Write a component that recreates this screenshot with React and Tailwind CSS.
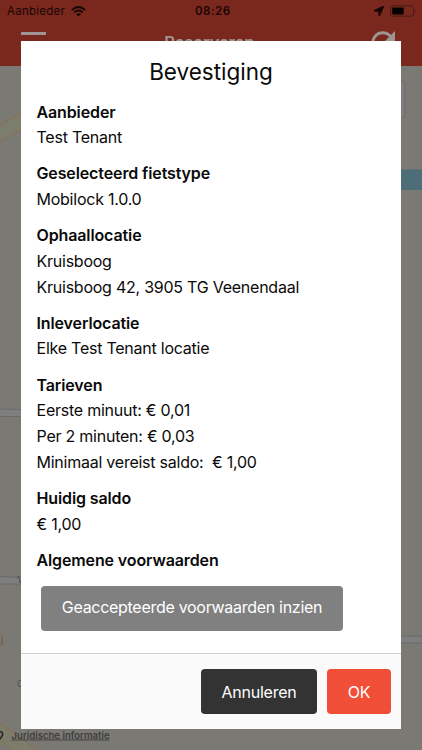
import { FaLocationArrow } from 'react-icons/fa'

const sections = [
  { title: 'Aanbieder', lines: ['Test Tenant'] },
  { title: 'Geselecteerd fietstype', lines: ['Mobilock 1.0.0'] },
  { title: 'Ophaallocatie', lines: ['Kruisboog', 'Kruisboog 42, 3905 TG Veenendaal'] },
  { title: 'Inleverlocatie', lines: ['Elke Test Tenant locatie'] },
  { title: 'Tarieven', lines: ['Eerste minuut: € 0,01', 'Per 2 minuten: € 0,03', 'Minimaal vereist saldo:  € 1,00'] },
  { title: 'Huidig saldo', lines: ['€ 1,00'] },
  { title: 'Algemene voorwaarden', lines: [] }
]

function StatusBar() {
  return (
    <div className="relative flex h-[22px] items-center justify-between pl-[7px] pr-[5px] text-[11.5px] text-[#180604]">
      <div className="flex items-center gap-[6px]">
        <span className="pt-px tracking-[0.25px]">Aanbieder</span>
        <svg className="h-[11px] w-[15px]" viewBox="0 0 15 11" fill="none" stroke="currentColor" strokeWidth="1.9">
          <path d="M0.9 4 Q7.5 -1.8 14.1 4" />
          <path d="M3.2 6.4 Q7.5 2.6 11.8 6.4" />
          <path d="M7.5 10.6 L5.1 8.2 Q7.5 6.3 9.9 8.2 Z" fill="currentColor" stroke="none" />
        </svg>
      </div>
      <span className="absolute left-[195px] pt-px font-semibold tracking-[0.5px]">08:26</span>
      <div className="flex items-center gap-[6px]">
        <FaLocationArrow className="h-[10px] w-[10px]" />
        <svg className="h-[12px] w-[27px]" viewBox="0 0 27 12">
          <rect x="0.6" y="0.9" width="23" height="10.2" rx="2.2" fill="none" stroke="#4a1a13" strokeWidth="1" />
          <rect x="2.2" y="2.5" width="11.5" height="7" rx="0.8" fill="#080101" />
          <path d="M25 4.2 Q26.6 6 25 7.8 Z" fill="#4a1a13" />
        </svg>
      </div>
    </div>
  )
}

function Header() {
  return (
    <header className="h-[66px] shrink-0 bg-[#7a281d]">
      <StatusBar />
      <div className="flex h-[44px] items-start justify-between pl-[21px] pr-[26.5px] pt-[10px] text-[#9e9492]">
        <svg className="h-[22px] w-[25px]" viewBox="0 0 25 22" fill="currentColor">
          <path d="M0 0h25v3H0zM0 9h25v3H0zM0 18h25v3H0z" />
        </svg>
        <span className="ml-[3px] text-[16.5px] font-semibold leading-[20px] tracking-[-0.1px]">Reserveren</span>
        <svg className="-mt-[2px] h-[25px] w-[26px]" viewBox="0 0 26 25">
          <path d="M20.500 6.500 A10 10 0 1 0 22.500 15" fill="none" stroke="currentColor" strokeWidth="3" />
          <path d="M25 1 V11.500 H14.500 Z" fill="currentColor" />
        </svg>
      </div>
    </header>
  )
}

function Map() {
  return (
    <svg className="w-full flex-1 bg-[#7b7974]" viewBox="0 66 422 684">
      {/* Roads */}
      <path d="M-2 127 L24 111.500 V128 L-2 143 Z" fill="#7c7d6c" />
      <path d="M-2 126.500 L24 111.500" stroke="#8c6c4b" />
      <path d="M-2 142.500 L24 128" stroke="#8c6c4b" />
      <path d="M-2 409 L22 409.500 V416.500 H-2 Z" fill="#7e7e7e" stroke="#6a6a6b" />
      <path d="M-2 576.500 L22 577.500 V584 H-2 Z" fill="#7e7e7e" stroke="#6a6a6b" />
      <path d="M400 636 H424 V643 H400 Z" fill="#7e7e7e" stroke="#696867" />
      <path d="M-2 722 L39 752 H14 L-2 742 Z" fill="#7c7d6c" />
      <path d="M-2 722 L40 752 M-2 738 L16 752" stroke="#8c6c4b" />
      {/* Water */}
      <path d="M400 169.500 H424 V190 H400 Z" fill="#4d6d79" />
      {/* Map controls */}
      <rect x="360" y="81" width="45" height="37" rx="4" fill="#7e7d7b" stroke="#6a6a6b" />
      <g fontFamily="Inter, sans-serif">
        <text x="1" y="643" fontSize="9.500" fill="#834528">j</text>
        <text x="17.500" y="583" fontSize="9" fill="#3d3d40">V</text>
        <text x="17" y="687" fontSize="9" fill="#4d4d50">C</text>
        <text x="11.500" y="738.500" fontSize="9.550" fontWeight="600" fill="#3e3e3e" textDecoration="underline">Juridische informatie</text>
      </g>
      <path d="M0 731.500 Q4 732.500 2 736 L0 739" fill="none" stroke="#252525" strokeWidth="1.500" />
    </svg>
  )
}

function ConfirmDialog() {
  return (
    <div className="absolute left-[21px] top-[41px] flex h-[688px] w-[380px] flex-col bg-white text-[#0a0a0a]">
      <h1 className="pt-[14px] text-center text-[22.5px] leading-[34px]">Bevestiging</h1>
      <div className="flex flex-1 flex-col gap-[10.3px] pl-[15.5px] pt-[10.6px] text-[16px] leading-[25.75px]">
        {sections.map(({ title, lines }) => (
          <section key={title}>
            <h2 className="font-semibold tracking-[-0.12px]">{title}</h2>
            {lines.map((line) => (
              <p key={line} className="whitespace-pre tracking-[-0.24px]">{line}</p>
            ))}
          </section>
        ))}
        <button className="ml-[4.5px] mt-[2px] h-[45px] w-[302px] rounded-[4px] bg-[#808080] tracking-[-0.29px] text-white">
          Geaccepteerde voorwaarden inzien
        </button>
      </div>
      <footer className="flex h-[76px] shrink-0 items-start justify-end gap-[10px] border-t border-[#d6cecf] bg-[#fafafa] pr-[10px] pt-[15px] text-[16px] tracking-[-0.25px] text-white">
        <button className="h-[45px] w-[116px] rounded-[4px] bg-[#333333]">Annuleren</button>
        <button className="h-[45px] w-[64px] rounded-[4px] bg-[#f04e37]">OK</button>
      </footer>
    </div>
  )
}

export default function App() {
  return (
    <div className="relative flex h-[750px] w-[422px] flex-col overflow-hidden font-['Inter',sans-serif]">
      <Header />
      <Map />
      <ConfirmDialog />
    </div>
  )
}
